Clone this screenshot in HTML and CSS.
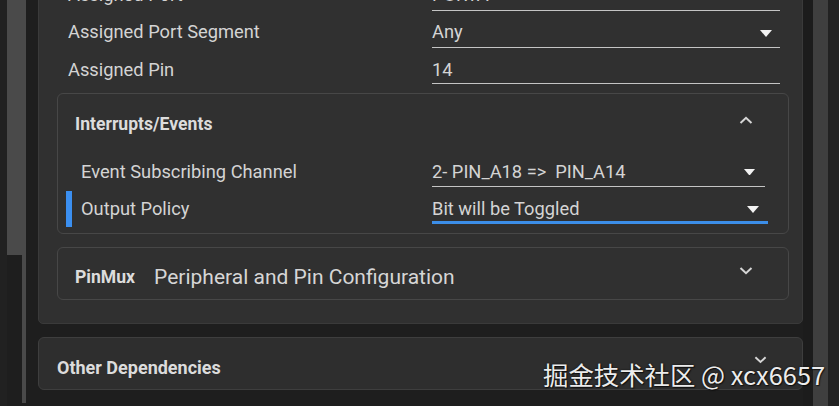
FILE: index.html
```html
<!DOCTYPE html>
<html>
<head>
<meta charset="utf-8">
<link rel="stylesheet" href="styles.css">
</head>
<body>
<div class="page">
  <div class="gutter-left">
    <div class="edge"></div>
    <div class="track">
      <div class="thumb"></div>
      <div class="thumb-tail"></div>
    </div>
  </div>
  <main class="main">
    <section class="panel">
      <div class="row r1">
        <div class="label">Assigned Port</div>
        <div class="field">PORTA</div>
      </div>
      <div class="row r2">
        <div class="label">Assigned Port Segment</div>
        <div class="field select">Any<span class="caret"></span></div>
      </div>
      <div class="row r3">
        <div class="label">Assigned Pin</div>
        <div class="field">14</div>
      </div>

      <div class="card events">
        <div class="card-head">
          <span class="title">Interrupts/Events</span>
          <svg class="chev" width="14" height="8" viewBox="0 0 14 8"><path d="M1.5 7 L7 1.8 L12.5 7" fill="none" stroke="#d6d6d6" stroke-width="2"/></svg>
        </div>
        <div class="row inner channel">
          <div class="label">Event Subscribing Channel</div>
          <div class="field select">2- PIN_A18 =&gt;&nbsp; PIN_A14<span class="caret"></span></div>
        </div>
        <div class="row inner active">
          <span class="marker"></span>
          <div class="label">Output Policy</div>
          <div class="field select focused">Bit will be Toggled<span class="caret"></span></div>
        </div>
      </div>

      <div class="card pinmux">
        <span class="title">PinMux</span>
        <span class="subtitle">Peripheral and Pin Configuration</span>
        <svg class="chev" width="14" height="8" viewBox="0 0 14 8"><path d="M1.5 1 L7 6.2 L12.5 1" fill="none" stroke="#d6d6d6" stroke-width="2"/></svg>
      </div>
    </section>

    <section class="card other">
      <span class="title">Other Dependencies</span>
      <svg class="chev" width="13" height="8" viewBox="0 0 14 8"><path d="M1.5 1 L7 6.2 L12.5 1" fill="none" stroke="#d6d6d6" stroke-width="2"/></svg>
    </section>
  </main>
  <div class="gutter-right">
    <div class="gap"></div>
    <div class="rtrack"></div>
    <div class="redge"></div>
  </div>
  <div class="watermark">掘金技术社区 @ xcx6657</div>
</div>
</body>
</html>
```
FILE: styles.css
```css
* { box-sizing: border-box; }
html, body { margin: 0; padding: 0; }
body {
  background: #1e1e1e;
  font-family: Roboto, "Noto Sans", sans-serif;
  color: #d6d6d6;
  width: 839px;
  height: 406px;
  overflow: hidden;
}
.page {
  position: relative;
  display: flex;
  height: 406px;
  overflow: hidden;
}
.gutter-left {
  width: 38px;
  display: flex;
  flex-shrink: 0;
}
.edge { width: 7px; background: #212121; }
.track { width: 19px; display: flex; flex-direction: column; align-items: flex-end; }
.thumb { width: 19px; height: 255px; background: #4a4a4a; }
.thumb-tail { width: 4px; height: 148px; background: #4a4a4a; }

.main {
  width: 765px;
  flex-shrink: 0;
  display: flex;
  flex-direction: column;
  gap: 13px;
}
.panel {
  margin-top: -31px;
  background: #303030;
  border: 1px solid #3a3a3a;
  border-radius: 5px;
  padding: 4px 13px 23px 18px;
}
.row {
  display: flex;
  align-items: flex-end;
  height: 37px;
  padding-left: 11px;
  position: relative;
}
.row.r3 { height: 36px; }
.label {
  width: 364px;
  flex-shrink: 0;
  font-size: 18.3px;
  line-height: 22px;
  padding-bottom: 5px;
  color: #d4d4d4;
}
.field {
  flex: 1;
  margin-right: 9px;
  font-size: 18.3px;
  line-height: 22px;
  padding-bottom: 4px;
  border-bottom: 1px solid #c4c4c4;
  position: relative;
  color: #d4d4d4;
}
.row.r3 .label { padding-bottom: 3px; }
.row.r3 .field { padding-bottom: 2px; }
.caret {
  position: absolute;
  right: 8px;
  top: 9px;
  width: 0; height: 0;
  border-left: 6.5px solid transparent;
  border-right: 6.5px solid transparent;
  border-top: 7px solid #f2f2f2;
}

.card {
  background: #303030;
  border: 1px solid #474747;
  border-radius: 6px;
}
.events {
  margin-top: 9px;
  padding: 0 0 6px 0;
}
.card-head {
  height: 58px;
  display: flex;
  align-items: center;
  justify-content: space-between;
  padding: 2px 35px 0 17px;
}
.card-head .chev { margin-top: -8px; }
.title {
  font-weight: 700;
  font-size: 17.6px;
  color: #dcdcdc;
}
.row.inner {
  padding-left: 23px;
}
.row.inner .label { width: 351px; }
.row.channel { height: 35px; margin-bottom: 4px; }
.row.channel .label { padding-bottom: 4px; }
.row.channel .field { margin-right: 23px; padding-bottom: 3px; }
.row.channel .caret { right: 10px; top: 8px; width: 11px; border-left-width: 5.5px; border-right-width: 5.5px; border-top-width: 6px; }
.row.active { height: 36px; padding-bottom: 3px; }
.row.active .label { padding-bottom: 4px; }
.row.active .field.focused {
  margin-right: 20px;
  border-bottom: 3px solid #3c8ee8;
  padding-bottom: 1px;
}
.row.active .caret { right: 9px; top: 8px; }
.marker {
  position: absolute;
  left: 8px;
  top: 0;
  width: 6px;
  height: 36px;
  background: #3b8ff0;
}

.pinmux {
  margin-top: 13px;
  height: 53px;
  display: flex;
  align-items: center;
  padding: 7px 35px 0 17px;
}
.pinmux .subtitle {
  font-size: 21px;
  margin-left: 19px;
  color: #d6d6d6;
  flex: 1;
}
.pinmux .chev { margin-top: -12px; }

.other {
  height: 53px;
  background: #2e2e2e;
  border-color: #3e3e3e;
  display: flex;
  align-items: center;
  justify-content: space-between;
  padding: 8px 35px 0 18px;
}
.other .title { font-size: 18px; }
.other .chev { margin-top: -16px; }

.gutter-right {
  display: flex;
  flex: 1;
}
.gap { width: 10px; background: #1c1c1c; }
.rtrack { width: 15px; background: #3f3f3f; }
.redge { flex: 1; background: #222222; }

.watermark {
  position: absolute;
  left: 543px;
  top: 357px;
  font-family: "Noto Sans CJK SC", "Noto Sans", sans-serif;
  font-size: 25.4px;
  line-height: 34px;
  color: #ececec;
  text-shadow: 0 0 2px rgba(0,0,0,0.8), 1px 1px 1px rgba(0,0,0,0.6);
  white-space: nowrap;
}
```
